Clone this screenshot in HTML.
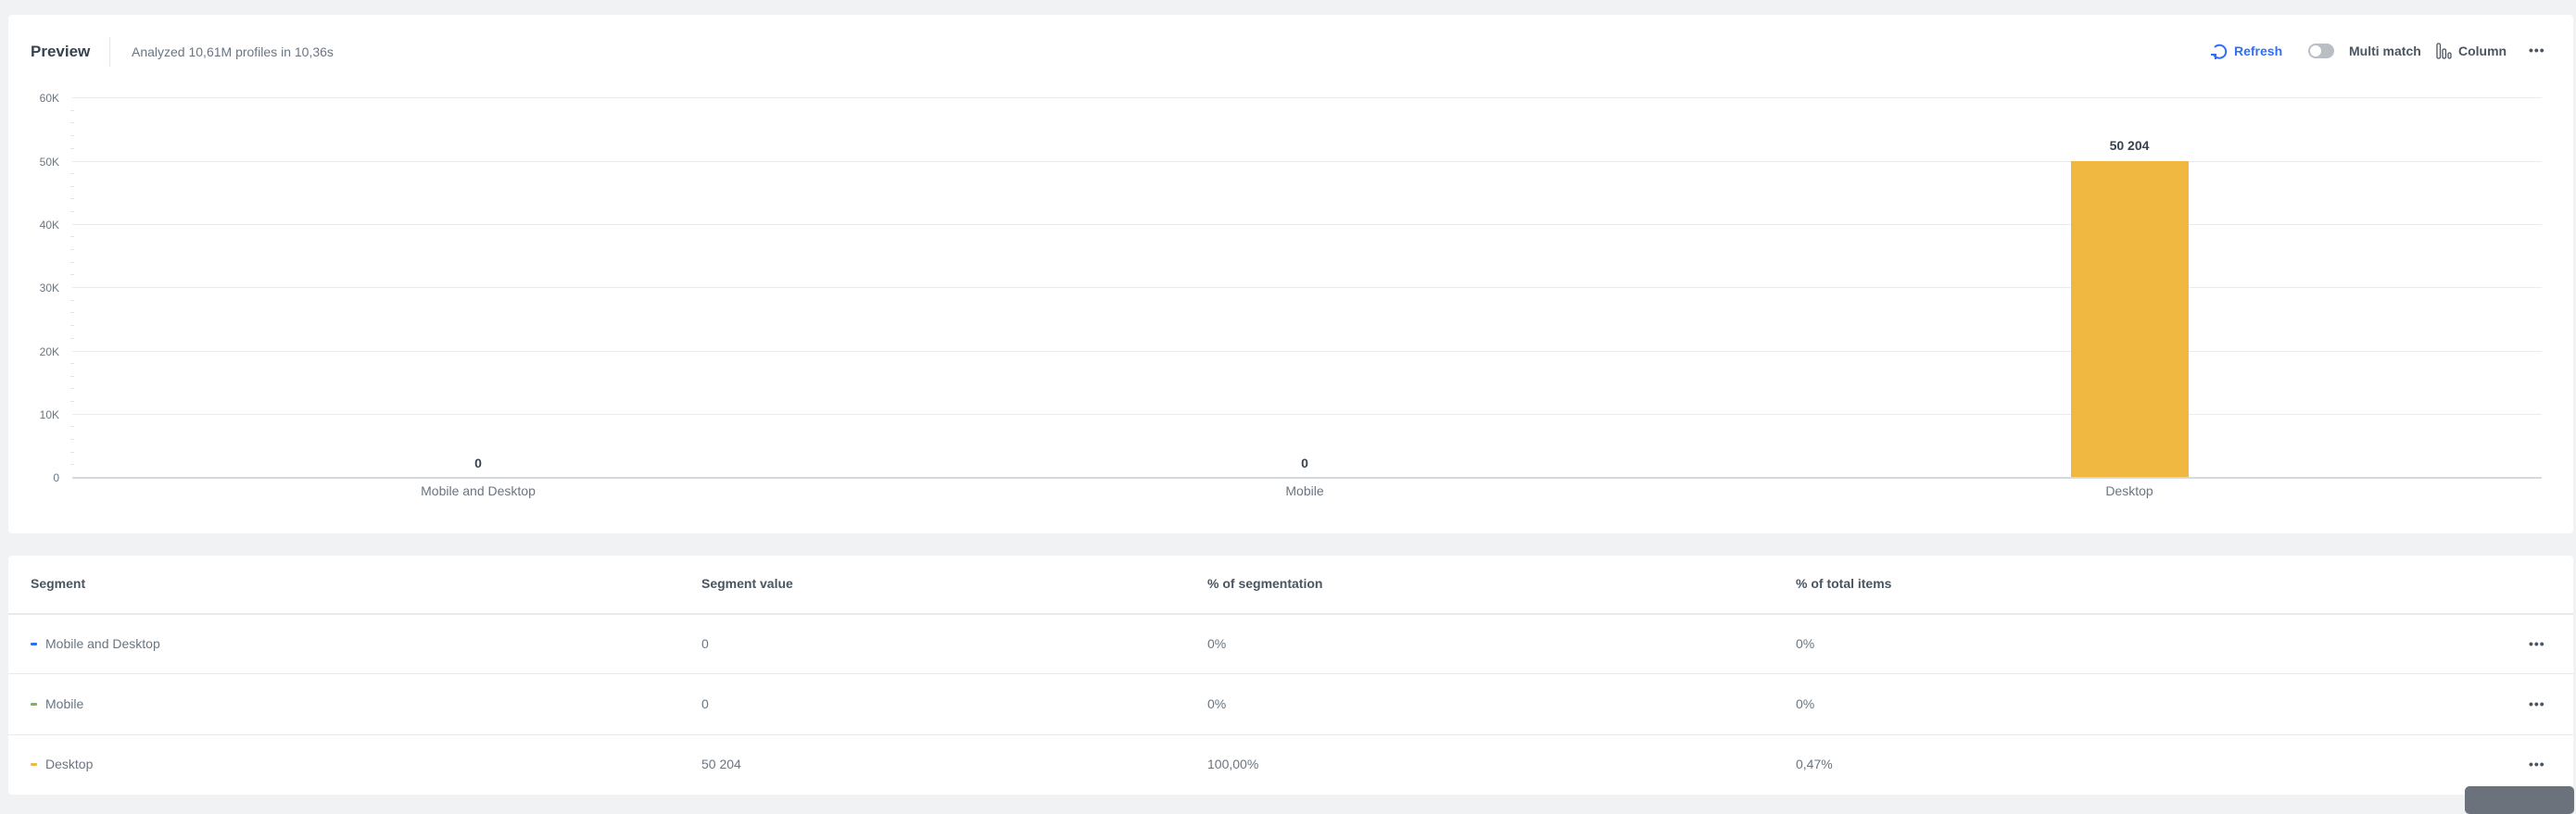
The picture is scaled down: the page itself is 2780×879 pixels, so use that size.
<!DOCTYPE html>
<html><head><meta charset="utf-8"><style>
*{margin:0;padding:0;box-sizing:border-box}
body{width:2780px;height:862px;background:#f0f2f4;font-family:"Liberation Sans",sans-serif;position:relative;overflow:hidden;color:#384350}
.card{position:absolute;background:#fff;border-radius:4px}
.t{position:absolute;white-space:nowrap}
.grid{position:absolute;left:78px;width:2665px;height:1px;background:#e9ebed}
.yl{position:absolute;right:2716px;font-size:12px;color:#6a7580;transform:translateY(-50%)}
.tick{position:absolute;left:76px;width:4px;height:1px;background:#e3e5e8}
.hl{position:absolute;left:9px;width:2768px;height:2px;background:#e8eaec}
.dots{position:absolute;font-size:14px;letter-spacing:1px;color:#4a5560;font-weight:bold}
.mk{position:absolute;left:33px;width:7px;height:3px;border-radius:1px}
.cell{position:absolute;font-size:14px;color:#6a7580;transform:translateY(-50%)}
</style></head><body>
<div class="card" style="left:9px;top:16px;width:2768px;height:560px"></div>
<div class="card" style="left:9px;top:600px;width:2768px;height:258px"></div>

<div class="t" style="left:33px;top:46px;font-size:17px;font-weight:bold;color:#384350">Preview</div>
<div style="position:absolute;left:118px;top:40px;width:1px;height:32px;background:#e3e5e8"></div>
<div class="t" style="left:142px;top:48px;font-size:14px;color:#6a7580">Analyzed 10,61M profiles in 10,36s</div>

<svg style="position:absolute;left:2385px;top:46px" width="20" height="20" viewBox="0 0 20 20"><path d="M4 13A7 7 0 1 0 5 5" fill="none" stroke="#2f6ff5" stroke-width="2"/><path d="M1 13h5v5" fill="none" stroke="#2f6ff5" stroke-width="2"/></svg>
<div class="t" style="left:2411px;top:47px;font-size:14px;font-weight:bold;color:#2f6ff5">Refresh</div>
<div style="position:absolute;left:2491px;top:47px;width:28px;height:16px;border-radius:8px;background:#b9bec5"></div>
<div style="position:absolute;left:2493px;top:49px;width:12px;height:12px;border-radius:6px;background:#fff"></div>
<div class="t" style="left:2535px;top:47px;font-size:14px;font-weight:bold;color:#4a5560">Multi match</div>
<svg style="position:absolute;left:2629px;top:46px" width="17" height="18" viewBox="0 0 17 18"><rect x="1" y="1" width="3.5" height="16" rx="1.5" fill="none" stroke="#4a5560" stroke-width="1.3"/><rect x="7" y="7" width="3.5" height="10" rx="1.5" fill="none" stroke="#4a5560" stroke-width="1.3"/><rect x="13" y="11" width="3" height="6" rx="1.5" fill="none" stroke="#4a5560" stroke-width="1.3"/></svg>
<div class="t" style="left:2653px;top:47px;font-size:14px;font-weight:bold;color:#4a5560">Column</div>
<div class="dots" style="left:2729px;top:46px">•••</div>

<div class="grid" style="top:105px"></div>
<div class="grid" style="top:174px"></div>
<div class="grid" style="top:242px"></div>
<div class="grid" style="top:310px"></div>
<div class="grid" style="top:379px"></div>
<div class="grid" style="top:447px"></div>
<div class="grid" style="top:515px;background:#d5d9e0;height:2px"></div>
<div class="yl" style="top:106px">60K</div>
<div class="yl" style="top:175px">50K</div>
<div class="yl" style="top:243px">40K</div>
<div class="yl" style="top:311px">30K</div>
<div class="yl" style="top:380px">20K</div>
<div class="yl" style="top:448px">10K</div>
<div class="yl" style="top:516px">0</div>
<div id="ticks"></div>
<div style="position:absolute;left:2235px;top:174px;width:127px;height:341px;background:#f0b840"></div>
<div class="t" style="left:2298px;top:149px;transform:translateX(-50%);font-size:14px;font-weight:bold;color:#384350">50 204</div>
<div class="t" style="left:516px;top:492px;transform:translateX(-50%);font-size:14px;font-weight:bold;color:#384350">0</div>
<div class="t" style="left:1408px;top:492px;transform:translateX(-50%);font-size:14px;font-weight:bold;color:#384350">0</div>
<div class="t" style="left:516px;top:522px;transform:translateX(-50%);font-size:14px;color:#6a7580">Mobile and Desktop</div>
<div class="t" style="left:1408px;top:522px;transform:translateX(-50%);font-size:14px;color:#6a7580">Mobile</div>
<div class="t" style="left:2298px;top:522px;transform:translateX(-50%);font-size:14px;color:#6a7580">Desktop</div>

<div class="cell" style="left:33px;top:630px;font-weight:bold;color:#4a5560">Segment</div>
<div class="cell" style="left:757px;top:630px;font-weight:bold;color:#4a5560">Segment value</div>
<div class="cell" style="left:1303px;top:630px;font-weight:bold;color:#4a5560">% of segmentation</div>
<div class="cell" style="left:1938px;top:630px;font-weight:bold;color:#4a5560">% of total items</div>
<div class="hl" style="top:662px"></div>
<div class="hl" style="top:727px;height:1px"></div>
<div class="hl" style="top:793px;height:1px"></div>

<div class="mk" style="top:694px;background:#2f6ff5"></div>
<div class="cell" style="left:49px;top:695px">Mobile and Desktop</div>
<div class="cell" style="left:757px;top:695px">0</div>
<div class="cell" style="left:1303px;top:695px">0%</div>
<div class="cell" style="left:1938px;top:695px">0%</div>
<div class="dots" style="left:2729px;top:687px">•••</div>

<div class="mk" style="top:759px;background:#6cc04a"></div>
<div class="cell" style="left:49px;top:760px">Mobile</div>
<div class="cell" style="left:757px;top:760px">0</div>
<div class="cell" style="left:1303px;top:760px">0%</div>
<div class="cell" style="left:1938px;top:760px">0%</div>
<div class="dots" style="left:2729px;top:752px">•••</div>

<div class="mk" style="top:824px;background:#f0b840"></div>
<div class="cell" style="left:49px;top:825px">Desktop</div>
<div class="cell" style="left:757px;top:825px">50 204</div>
<div class="cell" style="left:1303px;top:825px">100,00%</div>
<div class="cell" style="left:1938px;top:825px">0,47%</div>
<div class="dots" style="left:2729px;top:817px">•••</div>

<div style="position:absolute;left:2660px;top:849px;width:118px;height:30px;border-radius:5px;background:#6b727c"></div>
<script>
var h='';for(var g=0;g<6;g++){var t=105+g*68.33;for(var k=1;k<5;k++){h+='<div class="tick" style="top:'+Math.round(t+k*13.67)+'px"></div>';}}
document.getElementById('ticks').innerHTML=h;
</script>
</body></html>
